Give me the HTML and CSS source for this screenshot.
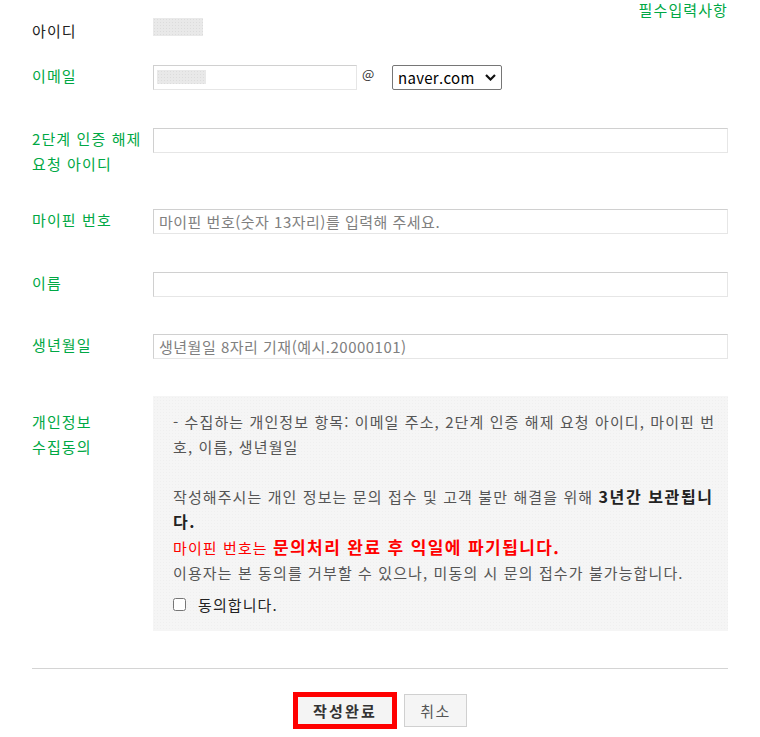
FILE: index.html
```html
<!DOCTYPE html>
<html lang="ko">
<head>
<meta charset="utf-8">
<title>문의하기</title>
<link rel="stylesheet" href="styles.css">
</head>
<body>
<div class="page">
  <div class="required">필수입력사항</div>
  <div class="form">
    <div class="row row-id">
      <div class="label label-plain">아이디</div>
      <div class="field field-flat"><span class="masked masked-id"></span></div>
    </div>

    <div class="row">
      <div class="label">이메일</div>
      <div class="field field-email">
        <div class="email-box">
          <input class="input input-email" type="text">
          <span class="masked masked-email"></span>
        </div>
        <span class="at">@</span>
        <div class="select-wrap">
          <select class="select"><option>naver.com</option></select>
          <svg class="chevron" width="11" height="7" viewBox="0 0 11 7"><polyline points="1,1 5.5,5.5 10,1" fill="none" stroke="#111" stroke-width="2.2"/></svg>
        </div>
      </div>
    </div>

    <div class="row row-2fa">
      <div class="label">2단계 인증 해제<br>요청 아이디</div>
      <div class="field"><input class="input" type="text"></div>
    </div>

    <div class="row">
      <div class="label">마이핀 번호</div>
      <div class="field"><input class="input" type="text" placeholder="마이핀 번호(숫자 13자리)를 입력해 주세요."></div>
    </div>

    <div class="row row-name">
      <div class="label">이름</div>
      <div class="field"><input class="input" type="text"></div>
    </div>

    <div class="row row-birth">
      <div class="label">생년월일</div>
      <div class="field"><input class="input" type="text" placeholder="생년월일 8자리 기재(예시.20000101)"></div>
    </div>

    <div class="row row-consent">
      <div class="label label-consent">개인정보<br>수집동의</div>
      <div class="field field-flat">
        <div class="consent">
          <p class="consent-text">- 수집하는 개인정보 항목: 이메일 주소, 2단계 인증 해제 요청 아이디, 마이핀 번호, 이름, 생년월일<br><br>작성해주시는 개인 정보는 문의 접수 및 고객 불만 해결을 위해 <b class="strong">3년간 보관됩니다.</b><br><span class="red">마이핀 번호는 <b class="strong-red">문의처리 완료 후 익일에 파기됩니다.</b></span><br>이용자는 본 동의를 거부할 수 있으나, 미동의 시 문의 접수가 불가능합니다.</p>
          <label class="agree"><input class="check" type="checkbox"><span>동의합니다.</span></label>
        </div>
      </div>
    </div>
  </div>

  <div class="divider"></div>

  <div class="actions">
    <button class="btn btn-submit" type="button">작성완료</button>
    <button class="btn btn-cancel" type="button">취소</button>
  </div>
</div>
</body>
</html>
```

FILE: styles.css
```css
* { box-sizing: border-box; }

html, body {
  margin: 0;
  padding: 0;
  background: #fff;
}

body {
  font-family: "Noto Sans CJK KR", "Noto Sans", sans-serif;
  font-size: 15px;
  letter-spacing: 1.1px;
  word-spacing: 0;
  color: #222;
}

.page {
  padding: 0 32px;
}

.required {
  height: 18px;
  line-height: 20px;
  text-align: right;
  color: #00a844;
}

.form {
  display: flex;
  flex-direction: column;
}

.row {
  display: flex;
  align-items: flex-start;
  margin-bottom: 36px;
}

.row-id { margin-bottom: 20px; }
.row-2fa { margin-bottom: 31px; }
.row-name { margin-bottom: 35px; }
.row-birth { margin-bottom: 37px; }
.row-consent { margin-bottom: 0; }

.label {
  flex: none;
  width: 121px;
  line-height: 25px;
  color: #00a844;
}

.label-plain { color: #222; }
.label-consent { padding-top: 13px; }

.field {
  flex: 1;
  padding-top: 2px;
  display: flex;
}

.field-flat { padding-top: 0; }

.field-email { align-items: flex-start; }

.masked {
  display: block;
  background-color: #e9e9e9;
  background-image: radial-gradient(#dcdcdc 0.6px, transparent 0.8px);
  background-size: 3px 3px;
}

.masked-id {
  width: 50px;
  height: 18px;
}

.input {
  display: block;
  width: 100%;
  height: 25px;
  margin: 0;
  padding: 0 5px;
  border: 1px solid;
  border-color: #d0d0d0 #e6e6e6 #e6e6e6 #d0d0d0;
  background: #fff;
  font-family: inherit;
  font-size: 15px;
  letter-spacing: 0.5px;
  word-spacing: 0;
  color: #333;
  outline: none;
}

.input::placeholder { color: #808080; }

.email-box {
  position: relative;
  width: 204px;
  flex: none;
}

.masked-email {
  position: absolute;
  left: 4px;
  top: 5px;
  width: 49px;
  height: 14px;
}

.at {
  flex: none;
  width: 35px;
  padding-left: 5px;
  line-height: 17px;
  font-size: 13px;
  letter-spacing: 0;
  color: #333;
}

.select-wrap {
  position: relative;
  width: 110px;
  flex: none;
}

.select {
  display: block;
  width: 110px;
  height: 25px;
  margin: 0;
  padding: 0 0 0 5px;
  border: 1px solid #767676;
  border-radius: 2px;
  background: #fff;
  -webkit-appearance: none;
  appearance: none;
  font-family: inherit;
  font-size: 15px;
  letter-spacing: 0.3px;
  color: #000;
}

.chevron {
  position: absolute;
  right: 6px;
  top: 9px;
  pointer-events: none;
}

.consent {
  width: 100%;
  height: 235px;
  padding: 13px 10px 15px 20px;
  background-color: #f5f5f5;
  background-image: radial-gradient(#efefef 0.6px, transparent 0.8px);
  background-size: 3px 3px;
}

.consent-text {
  margin: 0;
  line-height: 25px;
  color: #555;
}

.strong {
  font-size: 16px;
  font-weight: 700;
  letter-spacing: 1.6px;
  word-spacing: 0;
  color: #222;
}

.red { color: #f00; }

.strong-red {
  font-size: 17px;
  font-weight: 700;
  letter-spacing: 1.4px;
  word-spacing: 0;
  color: #f00;
}

.agree {
  display: flex;
  align-items: center;
  margin-top: 7px;
  height: 25px;
  color: #222;
}

.check {
  width: 13px;
  height: 13px;
  margin: 0 12px 0 0;
  flex: none;
}

.divider {
  margin-top: 37px;
  height: 1px;
  background: #d4d4d4;
}

.actions {
  display: flex;
  justify-content: center;
  align-items: center;
  gap: 7px;
  margin-top: 23px;
}

.btn {
  margin: 0;
  padding: 0;
  font-family: inherit;
  cursor: pointer;
}

.btn-submit {
  width: 104px;
  height: 37px;
  border: 5px solid #ff0000;
  background: #f4f4f4;
  font-size: 15px;
  font-weight: 700;
  letter-spacing: 2.2px;
  color: #333;
}

.btn-cancel {
  width: 63px;
  height: 33px;
  border: 1px solid #d0d0d0;
  background: #f5f5f5;
  font-size: 15px;
  letter-spacing: 1.5px;
  color: #555;
}
```
